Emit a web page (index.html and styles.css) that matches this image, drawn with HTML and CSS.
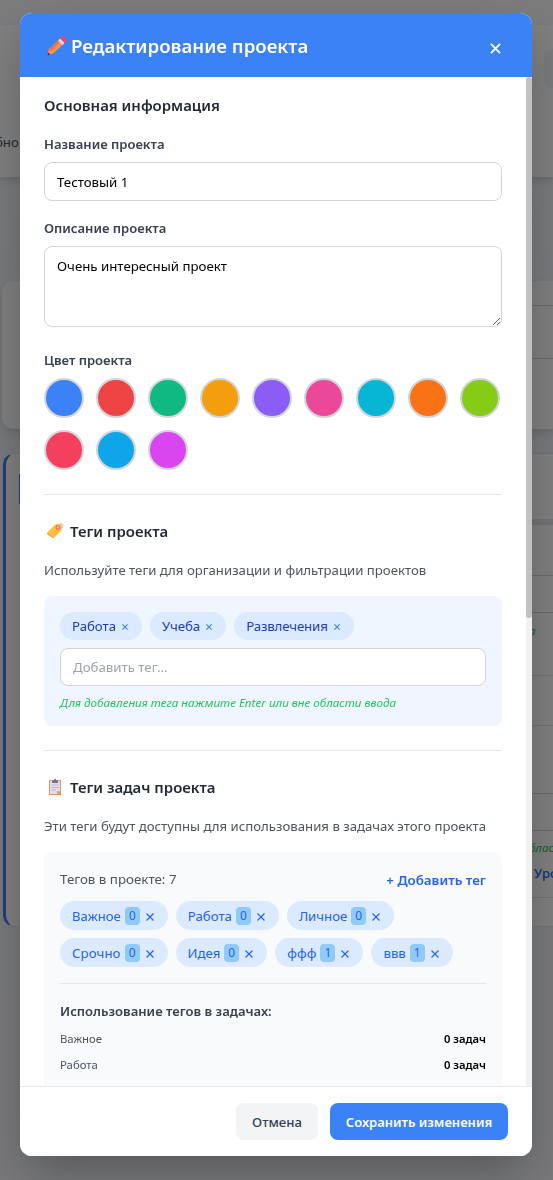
FILE: index.html
```html
<!DOCTYPE html>
<html lang="ru">
<head>
<meta charset="utf-8">
<title>Редактирование проекта</title>
<link rel="stylesheet" href="styles.css">
</head>
<body>
<div class="page">
  <div class="page-card intro"><span class="intro-text">бно</span><span class="intro-button"></span></div>
  <div class="page-card filters"><i class="field-a"></i><i class="field-b"></i></div>
  <div class="page-card project">
    <span class="project-icon"></span>
    <div class="project-side">
      <i class="bar"></i><i class="rule r2"></i><i class="rule r3"></i>
      <em class="side-hint h1">а</em>
      <i class="rule r4"></i><i class="rule r5"></i><i class="rule r6"></i><i class="rule r7"></i>
      <em class="side-hint h2">блас</em>
      <b class="side-link">Уро</b>
      <i class="rule r8"></i>
    </div>
  </div>
</div>

<div class="overlay">
  <div class="modal">
    <header class="modal-header">
      <svg class="pencil" viewBox="0 0 22 22"><path d="M1.3 20.4 3 14.3 14 3.8 18.4 8.1 7.2 18.6Z" fill="#ff9142"/><path d="m3 14.3 11-10.5 2 1.8L5 16.3Z" fill="#ef7448"/><path d="m1.3 20.4.8-3 2.2 2Z" fill="#542c4b"/><path d="m12 5.7 2.2-2.1 4.5 4.3-2.3 2.2Z" fill="#dcd3ed"/><path d="m14.2 3.6 2-1.9c.7-.6 1.3-.5 1.8 0l2.5 2.4c.6.6.5 1.2 0 1.7l-1.9 2Z" fill="#f8484f"/></svg>
      <h2 class="modal-title">Редактирование проекта</h2>
      <button class="close" aria-label="Закрыть"><svg viewBox="0 0 12 12"><path d="m1 1 10 10M11 1 1 11"/></svg></button>
    </header>

    <div class="modal-body">
      <div class="content">
        <section class="section basic">
          <h3 class="heading">Основная информация</h3>
          <label class="label">Название проекта</label>
          <input class="input" value="Тестовый 1">
          <label class="label">Описание проекта</label>
          <textarea class="input area">Очень интересный проект</textarea>
          <label class="label color-label">Цвет проекта</label>
          <div class="colors">
            <i class="swatch blue"></i><i class="swatch red"></i><i class="swatch green"></i><i class="swatch amber"></i><i class="swatch violet"></i><i class="swatch pink"></i><i class="swatch cyan"></i><i class="swatch orange"></i><i class="swatch lime"></i><i class="swatch rose"></i><i class="swatch sky"></i><i class="swatch fuchsia"></i>
          </div>
        </section>

        <section class="section project-tags">
          <h3 class="heading with-icon"><svg class="emoji" viewBox="0 0 22 22"><path d="M3.2 12.5 10.6 5q1-.9 2.3-.9l4.1.1q1.1 0 1.1 1.2l-.3 3.9q-.1 1-.9 1.7l-6.7 6.7q-.9.9-1.8 0L3.2 14.2q-.8-.9 0-1.7Z" fill="#ffc13b"/><path d="m3.2 14.2 1.3-1.1 4.9 4.6-1 .1Z" fill="#ff9f60"/><circle cx="13.7" cy="7.5" r="1.7" fill="#ffd0bd" stroke="#f05555" stroke-width="1.1"/><path d="M14.1 7.2c.8-4.5 4.7-4.9 4.9-1.6.1 2-1.1 3-2.9 3.1" fill="none" stroke="#b7bcc9" stroke-width=".8"/></svg>Теги проекта</h3>
          <p class="description">Используйте теги для организации и фильтрации проектов</p>
          <div class="tag-panel">
            <div class="tags">
              <span class="tag">Работа<svg viewBox="0 0 6 6"><path d="m.4.4 5.2 5.2M5.6.4.4 5.6"/></svg></span>
              <span class="tag">Учеба<svg viewBox="0 0 6 6"><path d="m.4.4 5.2 5.2M5.6.4.4 5.6"/></svg></span>
              <span class="tag long">Развлечения<svg viewBox="0 0 6 6"><path d="m.4.4 5.2 5.2M5.6.4.4 5.6"/></svg></span>
            </div>
            <input class="input tag-input" placeholder="Добавить тег...">
            <p class="hint">Для добавления тега нажмите Enter или вне области ввода</p>
          </div>
        </section>

        <section class="section task-tags">
          <h3 class="heading with-icon"><svg class="emoji" viewBox="0 0 22 22"><path d="M5 4h12v15H5z" fill="#e9945b"/><path d="M6 5h10v10l-3 3H6z" fill="#e3dcf0"/><path d="M16 15h-3v3z" fill="#c9a7ae"/><path d="M8 4.5h2l.3-1.5h1.6l.3 1.5H14V7H8z" fill="#77708b"/><path d="M7.4 9h7.2M7.4 11.5h7.2M7.4 14h4.8" stroke="#b9afcb" stroke-width=".9"/></svg>Теги задач проекта</h3>
          <p class="description">Эти теги будут доступны для использования в задачах этого проекта</p>
          <div class="task-panel">
            <div class="task-top"><span>Тегов в проекте: 7</span><button class="add-tag">+ Добавить тег</button></div>
            <div class="tags task-list">
              <span class="task-tag">Важное<b>0</b><svg viewBox="0 0 8 8"><path d="m.5.5 7 7M7.5.5l-7 7"/></svg></span>
              <span class="task-tag">Работа<b>0</b><svg viewBox="0 0 8 8"><path d="m.5.5 7 7M7.5.5l-7 7"/></svg></span>
              <span class="task-tag">Личное<b>0</b><svg viewBox="0 0 8 8"><path d="m.5.5 7 7M7.5.5l-7 7"/></svg></span>
              <span class="task-tag wide">Срочно<b>0</b><svg viewBox="0 0 8 8"><path d="m.5.5 7 7M7.5.5l-7 7"/></svg></span>
              <span class="task-tag">Идея<b>0</b><svg viewBox="0 0 8 8"><path d="m.5.5 7 7M7.5.5l-7 7"/></svg></span>
              <span class="task-tag">ффф<b>1</b><svg viewBox="0 0 8 8"><path d="m.5.5 7 7M7.5.5l-7 7"/></svg></span>
              <span class="task-tag">ввв<b>1</b><svg viewBox="0 0 8 8"><path d="m.5.5 7 7M7.5.5l-7 7"/></svg></span>
            </div>
            <div class="usage">
              <h4 class="usage-title">Использование тегов в задачах:</h4>
              <div class="usage-row"><span>Важное</span><b>0 задач</b></div>
              <div class="usage-row"><span>Работа</span><b>0 задач</b></div>
            </div>
          </div>
        </section>
      </div>
      <div class="scrollbar"><div class="thumb"></div></div>
    </div>

    <footer class="modal-footer">
      <button class="button cancel">Отмена</button>
      <button class="button save">Сохранить изменения</button>
    </footer>
  </div>
</div>
</body>
</html>
```
FILE: styles.css
```css
* { box-sizing: border-box; }
body { margin: 0; width: 553px; height: 1180px; overflow: hidden; background: #f1f4f9; color: #000; font: 13.2px "Noto Sans", sans-serif; }
h2, h3, h4, p { margin: 0; }
button, input, textarea { font-family: inherit; }
button { border: 0; padding: 0; background: none; white-space: nowrap; }
svg { display: block; flex: none; }

/* Page under the dialog */
.page { height: 1180px; padding-top: 25px; background: linear-gradient(#f8f9fb, #f0f3f8 280px, #f2f3f9); }
.page-card { background: #fff; box-shadow: 0 4px 8px rgba(0,0,0,.12); }
.intro { display: flex; justify-content: space-between; height: 152px; padding-top: 24px; }
.intro-text { margin: 84px 0 0 -5px; font-size: 13.2px; color: #4b5563; white-space: nowrap; }
.intro-button { width: 9px; height: 39px; border-radius: 8px 0 0 8px; background: #f3f4f6; }
.filters { margin: 104px 0 0 2px; height: 148px; border-radius: 12px 0 0 12px; padding-top: 24px; }
.filters i { display: block; height: 1px; margin-left: 500px; background: #d1d5db; }
.field-b { margin-top: 52px; }
.project { display: flex; justify-content: space-between; margin: 24px 0 0 3px; height: 474px; border: 1px solid #e5e7eb; border-right: 0; border-left: 3px solid #3b82f6; border-radius: 12px 0 0 12px; box-shadow: none; }
.project-icon { margin: 20px 0 0 13px; width: 4px; height: 30px; background: #3b82f6; }
.project-side { width: 21px; white-space: nowrap; }
.rule { display: block; height: 1px; background: #dfe2e7; }
.bar { display: block; height: 6px; margin-top: 65px; background: #e5e7eb; }
.r2 { margin-top: 50px; background: #d1d5db; }
.r3 { margin-top: 36px; background: #d1d5db; }
.side-hint { display: block; height: 16px; line-height: 16px; font-size: 11.5px; color: #22c55e; }
.h1 { margin: 10px 0 0 -3px; }
.r4 { margin-top: 36px; }
.r5 { margin-top: 49px; }
.r6 { margin-top: 67px; background: #d1d5db; }
.r7 { margin-top: 36px; background: #d1d5db; }
.h2 { margin: 9px 0 0 -3px; }
.side-link { display: block; margin: 7px 0 0 2px; height: 20px; line-height: 20px; font-size: 13px; font-weight: 500; color: #2563eb; }
.r8 { margin-top: 14px; }

/* Dialog */
.overlay { position: fixed; inset: 0; display: flex; padding: 13px 21px 24px 20px; background: rgba(0,0,0,.5); }
.modal { display: flex; flex-direction: column; width: 512px; border-radius: 12px; overflow: hidden; background: #fff; box-shadow: 0 20px 50px -6px rgba(0,0,0,.3); }
.modal-header { display: flex; align-items: center; flex: none; height: 64px; padding: 0 31px 0 27px; background: #3b82f6; color: #fff; }
.pencil { width: 22px; height: 22px; margin: 1px 1px 0 -1px; }
.modal-title { margin: 2px 0 0 2px; flex: 1; font-size: 18.65px; font-weight: 600; line-height: 28px; white-space: nowrap; }
.close { width: 11px; height: 11px; margin-top: 6px; }
.close svg { width: 11px; height: 11px; stroke: #fff; stroke-width: 2; }
.modal-body { display: flex; flex: 1; min-height: 0; overflow: hidden; }
.content { width: 506px; padding: 16px 24px; }
.scrollbar { width: 6px; border-radius: 3px; background: #f1f1f1; }
.thumb { height: 541px; border-radius: 3px; background: #c1c1c1; }
.section + .section { border-top: 1px solid #e5e7eb; padding-top: 24px; margin-top: 24px; }
.heading { display: flex; align-items: center; height: 24px; font-size: 14.95px; font-weight: 600; color: #1f2937; white-space: nowrap; }
.label { display: block; height: 21px; margin: 15px 0 7px; font-size: 13.05px; line-height: 21px; font-weight: 600; color: #374151; }
.heading + .label { margin-top: 17px; }
.input { display: block; width: 100%; height: 39px; margin: 0; padding: 0 12px; border: 1px solid #d1d5db; border-radius: 8px; background: #fff; color: #000; font-size: 13.25px; outline: 0; }
.label + .input { margin-top: 7px; }
.input + .label { margin-top: 17px; }
.area { height: 81px; padding: 9px 12px; line-height: 20px; resize: vertical; }
.input + .color-label { margin-top: 23px; margin-bottom: 7px; }
.colors { display: flex; flex-wrap: wrap; gap: 12px; width: 460px; }
.swatch { width: 40px; height: 40px; border: 2px solid #d1d5db; border-radius: 50%; }
.blue { background: #3b82f6; } .red { background: #ef4444; } .green { background: #10b981; }
.amber { background: #f59e0b; } .violet { background: #8b5cf6; } .pink { background: #ec4899; }
.cyan { background: #06b6d4; } .orange { background: #f97316; } .lime { background: #84cc16; }
.rose { background: #f43f5e; } .sky { background: #0ea5e9; } .fuchsia { background: #d946ef; }
.emoji { width: 22px; height: 22px; margin-right: 4px; }
.description { height: 22px; margin: 16px 0 15px; line-height: 22px; color: #4b5563; white-space: nowrap; }
.tag-panel { height: 130px; padding: 16px; border-radius: 8px; background: #eff6ff; }
.tags { display: flex; flex-wrap: wrap; gap: 8px; }
.tag { display: flex; align-items: center; height: 28px; padding: 0 14px 0 12px; border-radius: 14px; background: #dbeafe; color: #1e40af; }
.tag.long { letter-spacing: -.1px; }
.tag svg { width: 6px; height: 6px; margin: 1px 0 0 6px; stroke: #3b82f6; stroke-width: 1.1; }
.tag-input { height: 38px; margin-top: 8px; }
.tag-input::placeholder { color: #9ca3af; opacity: 1; }
.hint { height: 18px; margin-top: 8px; line-height: 18px; font-size: 11.65px; font-style: italic; color: #22c55e; white-space: nowrap; }
.task-panel { height: 330px; padding: 17px 16px 16px; border-radius: 8px; background: #f9fafb; }
.task-top { display: flex; justify-content: space-between; height: 21px; line-height: 21px; color: #4b5563; font-size: 13.35px; }
.add-tag { font-size: 13.35px; line-height: 20px; font-weight: 600; color: #2563eb; }
.task-list { margin-top: 11px; }
.task-tag { display: flex; align-items: center; height: 29px; padding: 0 14px 0 12px; border-radius: 15px; background: #dbeafe; color: #2563eb; }
.task-tag.wide { letter-spacing: .12px; }
.task-tag b { width: 15px; height: 18px; margin: 0 6px 0 4px; border-radius: 4px; background: #90caf9; font-size: 12px; font-weight: 400; line-height: 18px; text-align: center; letter-spacing: 0; }
.task-tag svg { width: 8px; height: 8px; margin-top: 3px; stroke: #2563eb; stroke-width: 1.15; }
.usage { margin-top: 16px; padding-top: 16px; border-top: 1px solid #e5e7eb; }
.usage-title { height: 22px; font-size: 13.05px; line-height: 22px; font-weight: 600; color: #374151; }
.usage-row { display: flex; justify-content: space-between; height: 18px; margin-top: 8px; font-size: 11.35px; line-height: 18px; color: #4b5563; }
.usage-row b { font-weight: 600; font-size: 11.25px; color: #000; }
.modal-footer { display: flex; justify-content: flex-end; flex: none; gap: 12px; height: 70px; padding: 16px 24px; border-top: 1px solid #e5e7eb; background: #fff; }
.button { height: 37px; padding-top: 1px; border-radius: 8px; font-size: 13px; font-weight: 500; line-height: 36px; }
.cancel { width: 82px; background: #f3f4f6; color: #374151; font-size: 13.2px; }
.save { width: 178px; background: #3b82f6; color: #fff; font-weight: 600; }
```
